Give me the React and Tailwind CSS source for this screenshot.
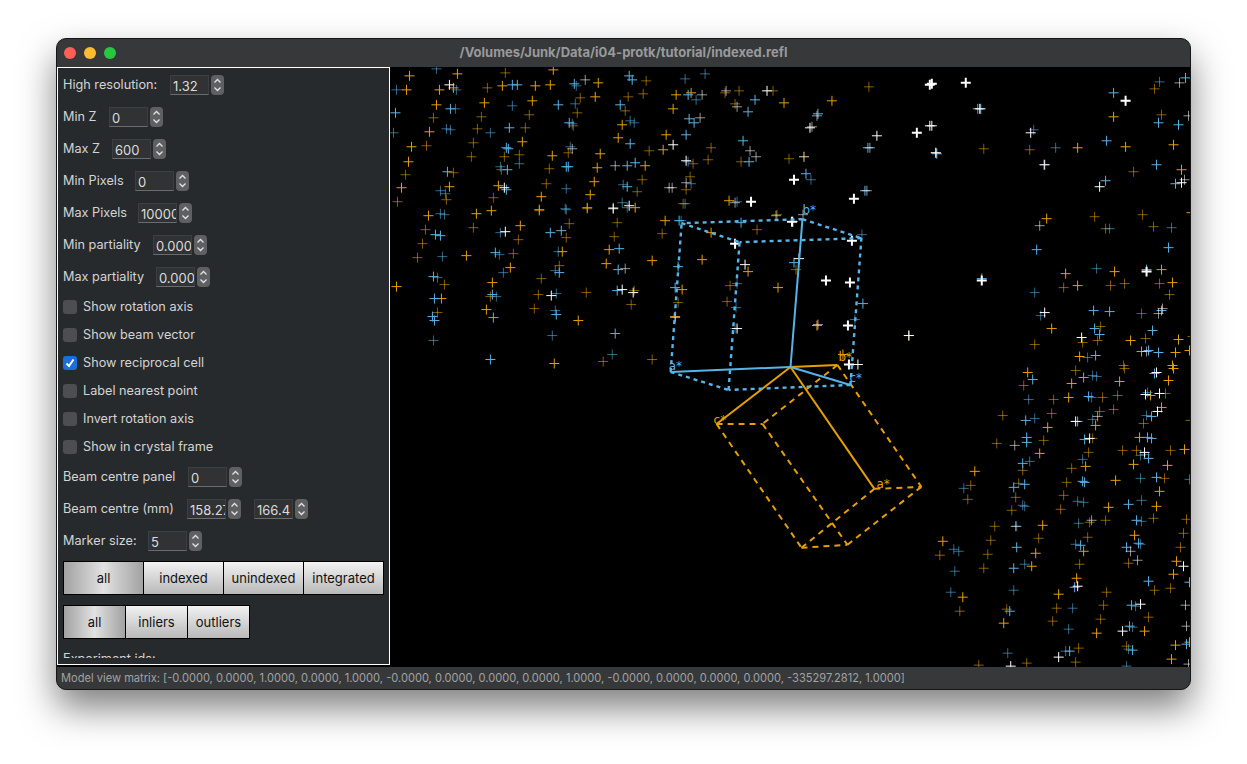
import React from 'react';

const BLUE = '#56b4e9';
const ORANGE = '#e69f00';

// spots read off 3x crops of the view: [origin x, origin y, orange, blue, white]
// each spot is x, y, level in crop pixels (level: 0 dim, 1 bright, 2 heavy)
const crops = [
    [390, 60,
        [[57,43,1],[200,37,1],[345,32,0],[488,25,1],[290,77,0],[335,73,1],[435,73,1],[480,68,1],[147,85,1],[48,85,1],[190,78,1],[138,128,1],[282,122,1],[425,116,1],[570,108,0],[614,105,1],[624,62,1],[768,56,0],[713,104,0],[760,97,0],[128,168,0],[272,165,0],[418,158,0],[560,152,0],[705,147,0],[695,188,1],[116,209,1],[260,201,0],[406,197,0],[548,191,0],[827,220,1],[683,227,1],[250,244,0],[396,239,1],[63,254,1],[108,251,0],[243,285,0],[386,278,0],[341,284,0],[486,281,1],[533,272,0],[629,275,1],[776,266,0],[819,263,1],[54,299,1],[188,334,0],[45,340,0],[332,325,0],[477,320,0],[620,318,1],[765,311,1],[33,379,1],[177,375,1],[324,371,1],[469,365,0],[612,360,1],[757,354,0],[742,390,0],[600,398,1],[453,404,1],[310,408,0],[167,415,0],[22,421,0],[447,444,1],[591,438,1]],
        [[138,22,0],[18,85,0],[197,83,0],[366,68,1],[381,70,1],[551,65,1],[558,72,0],[717,42,1],[727,55,1],[14,152,1],[180,140,1],[196,142,0],[366,133,0],[505,130,1],[556,125,0],[690,128,1],[720,178,0],[732,182,0],[536,183,1],[545,187,0],[357,197,1],[300,212,0],[168,201,0],[180,204,0],[10,212,0],[720,246,1],[541,254,0],[348,258,1],[355,262,1],[734,302,1],[711,311,1],[527,314,1],[534,316,1],[330,316,0],[350,324,1],[387,307,0],[171,331,1],[700,368,0],[712,375,1],[527,380,0],[150,387,0],[165,396,0],[347,384,1],[697,422,0],[526,442,0]],
        [[178,70,1],[584,55,0],[545,260,0],[675,312,0],[343,378,1],[838,378,0],[670,438,0],[717,433,1]],
    ],
    [390, 205,
        [[115,28,1],[258,21,1],[303,13,1],[447,12,0],[591,7,0],[735,2,1],[105,69,0],[249,62,0],[390,57,1],[537,51,0],[681,47,0],[825,41,1],[95,111,0],[384,99,0],[528,94,0],[673,89,0],[815,82,0],[82,152,0],[228,147,1],[369,140,0],[516,134,1],[657,128,1],[360,182,1],[507,177,0],[648,170,1],[786,161,1],[163,234,0],[306,228,1],[454,217,0],[18,240,1],[153,276,1],[301,269,0],[444,264,0],[588,258,0],[733,253,0],[141,318,0],[288,310,1],[432,306,0],[722,294,0],[564,341,1],[785,459,0],[639,465,0],[493,471,1],[855,330,1]],
        [[150,22,0],[163,24,0],[527,8,0],[712,4,0],[868,43,1],[135,84,1],[150,87,1],[330,78,0],[480,78,1],[513,72,1],[315,139,1],[328,143,0],[687,125,1],[156,151,0],[504,134,0],[340,199,0],[494,192,0],[507,197,1],[684,189,1],[129,209,1],[141,212,0],[132,276,1],[306,264,1],[319,269,0],[498,261,0],[681,252,1],[309,333,1],[495,312,0],[497,325,1],[127,329,1],[133,342,1],[675,381,1],[128,403,0],[487,388,0],[666,444,0],[301,459,1],[855,242,1],[864,180,1]],
        [[345,75,1],[670,5,1],[705,185,0],[696,249,1],[729,258,1],[484,267,1],[855,333,0]],
    ],
    [670, 66,
        [[18,81,1],[64,75,1],[207,70,0],[165,75,0],[308,68,0],[342,105,1],[487,99,1],[597,57,0],[196,108,0],[10,123,1],[124,241,0],[114,276,0],[212,282,0],[357,274,0],[402,268,0],[69,288,0],[59,328,0],[48,367,0],[178,399,1],[40,408,0]],
        [[44,33,0],[105,18,0],[55,81,1],[79,95,0],[255,96,1],[235,133,1],[445,138,1],[57,153,1],[72,165,1],[49,201,1],[220,219,1],[595,239,1],[237,282,1],[54,282,0],[407,319,1],[423,335,0],[63,347,0],[585,370,1],[201,403,0],[46,409,0]],
        [[96,81,0],[168,70,0],[290,70,1],[201,116,0],[91,150,0],[441,145,0],[421,180,1],[427,177,0],[620,204,1],[600,239,0],[8,232,1],[241,250,0],[258,267,0],[47,280,1],[402,268,0],[373,337,2],[48,345,0],[552,394,2],[590,370,0],[242,403,2],[195,405,0],[5,360,0]],
    ],
    [650, 190,
        [[322,115,0],[182,124,1],[156,204,1],[295,240,1],[437,235,0],[240,281,0],[383,288,1],[95,293,1],[85,334,0],[231,330,0],[500,402,1],[778,432,1],[578,488,1],[380,70,0]],
        [[94,88,0],[273,94,1],[428,90,1],[635,130,0],[432,212,1],[260,277,0],[640,335,1],[258,349,0],[615,384,0],[255,410,0]],
        [[378,72,0],[427,90,2],[458,70,0],[605,147,2],[255,155,2],[284,219,1],[448,200,1],[528,267,2],[600,272,2],[260,410,1],[593,402,2],[503,400,0],[778,432,1],[598,518,2],[625,518,1]],
    ],
    [930, 66,
        [[676,64,0],[553,147,1],[696,140,0],[162,244,0],[300,245,0],[444,240,1],[588,237,1],[732,231,1],[612,312,0],[756,306,1],[350,452,1],[495,447,0],[639,441,0],[528,483,0],[671,477,0],[786,436,1],[409,617,1],[554,612,1],[697,606,1],[402,659,0],[444,654,1],[543,654,0],[586,647,0],[690,648,0],[729,644,1],[721,682,0],[367,784,1],[513,777,0],[314,831,0],[503,819,0],[459,825,0],[604,820,1],[647,814,0],[746,815,1],[789,808,0],[450,866,1],[636,852,1],[739,855,1],[780,848,1],[729,894,1],[583,895,0]],
        [[690,42,0],[768,30,1],[553,75,1],[587,100,0],[686,165,1],[747,170,1],[312,186,0],[152,122,1],[531,219,1],[378,240,0],[681,292,1],[341,291,0],[528,339,1],[738,348,1],[541,483,0],[726,479,0],[322,547,1],[717,540,1],[500,602,0],[650,606,1],[155,632,1],[315,675,0],[493,730,1],[540,731,1],[636,739,0],[697,728,1],[332,743,0],[669,788,1],[495,783,1],[511,801,1],[658,848,1],[688,855,1],[498,864,1],[474,870,0],[20,258,1]],
        [[5,48,2],[107,45,2],[143,122,0],[150,122,1],[587,100,2],[5,175,1],[18,256,0],[304,195,1],[345,290,1],[510,358,1],[757,345,1],[765,335,0],[750,45,0],[778,145,0],[330,473,0],[652,611,2],[157,638,2],[345,735,1],[700,722,0],[687,737,0],[456,810,1],[650,852,0]],
    ],
    [930, 366,
        [[294,14,1],[437,8,0],[585,2,0],[731,2,1],[283,53,0],[426,48,1],[570,43,1],[717,38,1],[373,96,0],[417,89,1],[518,89,0],[563,84,0],[707,78,0],[663,85,1],[220,143,0],[366,137,0],[510,131,0],[553,125,0],[697,119,1],[354,179,1],[497,174,1],[642,167,0],[784,160,0],[202,227,0],[343,220,0],[489,213,0],[630,209,1],[331,259,1],[477,254,0],[579,248,0],[621,248,0],[723,248,0],[765,245,1],[135,313,1],[280,308,0],[426,302,0],[468,296,1],[612,291,1],[714,293,1],[124,354,0],[268,349,0],[411,344,0],[559,338,1],[705,332,0],[115,396,0],[258,389,0],[402,384,0],[691,373,1],[247,430,0],[393,425,0],[538,420,1],[681,417,1],[195,477,0],[339,474,1],[481,465,0],[528,459,0],[672,453,0],[772,456,0],[38,522,1],[184,519,0],[327,514,0],[474,509,0],[615,504,1],[762,497,0],[30,564,0],[174,560,0],[318,557,1],[462,551,1],[753,540,0],[163,602,0],[306,596,1],[451,590,0],[597,587,0],[742,581,1],[441,632,1],[732,620,1],[99,689,1],[387,680,1],[531,674,0],[676,669,0],[723,662,0],[90,731,0],[232,726,0],[380,722,0],[522,715,0],[222,767,1],[369,762,0],[513,757,0],[657,750,0],[501,797,1],[645,791,1],[448,844,0],[592,838,0],[738,833,1],[780,826,1],[726,875,1],[147,893,0],[292,888,0],[437,885,0]],
        [[676,18,1],[310,36,1],[461,30,1],[488,24,0],[502,27,0],[298,96,0],[477,87,1],[487,90,0],[655,75,0],[288,159,1],[316,152,0],[445,163,1],[490,156,0],[652,144,0],[666,147,1],[291,209,1],[291,224,1],[465,216,1],[654,210,1],[666,212,1],[458,276,0],[278,287,1],[299,282,0],[633,265,0],[645,262,0],[657,272,1],[102,363,0],[253,361,1],[284,352,1],[459,343,1],[466,346,1],[632,332,0],[681,329,1],[445,401,0],[461,406,0],[278,415,0],[285,417,0],[597,410,1],[636,399,0],[780,335,0],[447,468,0],[622,460,1],[637,463,0],[260,477,0],[71,545,0],[87,552,0],[261,541,1],[437,532,0],[452,535,1],[627,527,1],[633,530,0],[592,540,1],[75,612,0],[252,604,1],[285,590,0],[657,642,1],[64,676,0],[253,670,0],[435,660,1],[780,645,1],[240,731,1],[430,724,0],[605,715,1],[618,716,0],[418,787,0],[600,778,1],[609,780,0],[233,858,0],[408,851,0],[421,853,1],[598,845,0],[609,850,1],[770,830,1],[592,898,0]],
        [[681,15,1],[648,80,1],[690,78,1],[683,133,1],[503,147,0],[439,163,1],[480,212,1],[646,255,1],[255,235,0],[486,458,0],[257,478,0],[603,552,0],[623,578,0],[761,597,1],[445,657,1],[632,711,1],[768,715,0],[772,778,0],[579,791,1],[387,869,1],[243,898,1],[778,890,0]],
    ],
];

const extraWhite = [[930, 83, 2], [917, 131, 2], [930, 124, 1], [936, 151, 1]];

function Plus({ x, y, c, level }) {
    const px = Math.round(x) + 0.5;
    const py = Math.round(y) + 0.5;
    const s = 5;
    const o = level === 0 ? 0.58 : 1;
    const w = level === 2 ? 2 : 1;
    return (
        <path d={`M${px - s} ${py}H${px + s}M${px} ${py - s}V${py + s}`} stroke={c} strokeOpacity={o} strokeWidth={w} fill="none" />
    );
}

function Spots() {
    const out = [];
    crops.forEach(([ox, oy, orange, blue, white], i) => {
        [[orange, ORANGE], [blue, BLUE], [white, '#ffffff']].forEach(([list, c]) => {
            list.forEach((s, j) => {
                out.push(<Plus key={`${i}-${c}-${j}`} x={ox + s[0] / 3} y={oy + s[1] / 3} c={c} level={s[2]} />);
            });
        });
    });
    extraWhite.forEach((s, j) => {
        out.push(<Plus key={`x-${j}`} x={s[0]} y={s[1]} c="#ffffff" level={s[2]} />);
    });
    return out;
}

function Cell({ color, o, a, b, c, ab, ac, bc, abc, dash, dashWidth }) {
    const solid = [a, b, c];
    const dashed = [[a, ab], [b, ab], [a, ac], [c, ac], [b, bc], [c, bc], [ab, abc], [ac, abc], [bc, abc]];
    return (
        <g stroke={color} fill="none" strokeWidth="2">
            {dashed.map((l, i) => (
                <line key={i} x1={l[0][0]} y1={l[0][1]} x2={l[1][0]} y2={l[1][1]} strokeDasharray={dash} strokeWidth={dashWidth} />
            ))}
            {solid.map((p, i) => (
                <line key={i} x1={o[0]} y1={o[1]} x2={p[0]} y2={p[1]} />
            ))}
        </g>
    );
}

function Scene() {
    return (
        <svg width="801" height="600" viewBox="390 66 801 600" className="block">
            <Spots />
            <Cell
                color={ORANGE}
                dash="6 5"
                dashWidth="2"
                o={[791, 366]}
                a={[875, 488]}
                b={[838, 364]}
                c={[717, 423]}
                ab={[922, 486]}
                ac={[802, 547]}
                bc={[763, 423]}
                abc={[848, 544]}
            />
            <Cell
                color={BLUE}
                dash="4 4"
                dashWidth="2.4"
                o={[791, 366]}
                a={[671, 371]}
                b={[803, 218]}
                c={[851, 384]}
                ab={[682, 222]}
                ac={[729, 389]}
                bc={[862, 237]}
                abc={[740, 241]}
            />
            <g fontFamily="'DejaVu Sans', sans-serif" fontSize="12">
                <text x="669" y="369" fill={BLUE}>a*</text>
                <text x="803" y="213" fill={BLUE}>b*</text>
                <text x="850" y="381" fill={BLUE}>c*</text>
                <text x="839" y="360" fill={ORANGE}>b*</text>
                <text x="714" y="423" fill={ORANGE}>c*</text>
                <text x="877" y="487" fill={ORANGE}>a*</text>
            </g>
        </svg>
    );
}

function Spin({ value, className = '' }) {
    return (
        <div className={`flex items-center gap-[2px] ${className}`}>
            <div className="w-[39px] h-[20px] bg-[#303234] border border-[#3c3e40] border-b-[#6a6b6d] pl-[2px] overflow-hidden whitespace-nowrap leading-[20px] text-[13px] text-[#dcdcdc]">
                {value}
            </div>
            <div className="w-[13px] h-[20px] rounded-[4px] bg-[#5f6062] flex flex-col items-center justify-center gap-[2px]">
                <svg width="9" height="6" viewBox="0 0 9 6" fill="none" stroke="#e4e4e4" strokeWidth="1.3">
                    <path d="M1.5 4.5 4.5 1.5 7.5 4.5" />
                </svg>
                <svg width="9" height="6" viewBox="0 0 9 6" fill="none" stroke="#e4e4e4" strokeWidth="1.3">
                    <path d="M1.5 1.5 4.5 4.5 7.5 1.5" />
                </svg>
            </div>
        </div>
    );
}

function SpinRow({ label, labelWidth, value }) {
    return (
        <div className="h-[32px] flex items-center">
            <span className={labelWidth}>{label}</span>
            <Spin value={value} />
        </div>
    );
}

function Check({ label, checked }) {
    return (
        <div className="h-[28px] flex items-center gap-[6px]">
            {checked ? (
                <div className="w-[14px] h-[14px] rounded-[3px] bg-[#1a6fdf] flex items-center justify-center">
                    <svg width="10" height="10" viewBox="0 0 10 10" fill="none" stroke="#ffffff" strokeWidth="2">
                        <path d="M1.5 5.5 4 8 8.5 1.5" />
                    </svg>
                </div>
            ) : (
                <div className="w-[14px] h-[14px] rounded-[3px] bg-[#4c4e50]" />
            )}
            <span>{label}</span>
        </div>
    );
}

function ToggleGroup({ items, itemWidth, firstWidth, className = '' }) {
    return (
        <div className={`flex w-fit border border-black h-[34px] text-[13px] text-[#111111] ${className}`}>
            {items.map((item, i) => (
                <div
                    key={item}
                    className={`${i === 0 ? firstWidth : itemWidth} pt-px flex items-center justify-center ${i > 0 ? 'border-l border-black' : ''} ${i === 0 ? 'bg-gradient-to-r from-[#a2a2a2] via-[#e2e2e2] to-[#a2a2a2]' : 'bg-gradient-to-b from-[#f2f2f2] to-[#b9b9b9]'}`}
                >
                    {item}
                </div>
            ))}
        </div>
    );
}

function Sidebar() {
    return (
        <div className="w-[333px] h-[598px] border border-white bg-[#272a2c] text-[12.7px] text-[#d4d4d4] shrink-0">
            <div className="h-[590px] overflow-hidden pl-[5px] pt-[1px]">
                <SpinRow label="High resolution:" labelWidth="w-[107px]" value="1.32" />
                <SpinRow label="Min Z" labelWidth="w-[46px]" value="0" />
                <SpinRow label="Max Z" labelWidth="w-[49px]" value="600" />
                <SpinRow label="Min Pixels" labelWidth="w-[72px]" value="0" />
                <SpinRow label="Max Pixels" labelWidth="w-[75px]" value="10000" />
                <SpinRow label="Min partiality" labelWidth="w-[90px]" value="0.000" />
                <SpinRow label="Max partiality" labelWidth="w-[93px]" value="0.000" />
                <Check label="Show rotation axis" />
                <Check label="Show beam vector" />
                <Check label="Show reciprocal cell" checked />
                <Check label="Label nearest point" />
                <Check label="Invert rotation axis" />
                <Check label="Show in crystal frame" />
                <SpinRow label="Beam centre panel" labelWidth="w-[125px]" value="0" />
                <div className="h-[32px] flex items-center">
                    <span className="w-[124px]">Beam centre (mm)</span>
                    <Spin value="158.27" />
                    <Spin value="166.4" className="ml-[13px]" />
                </div>
                <SpinRow label="Marker size:" labelWidth="w-[85px]" value="5" />
                <ToggleGroup className="mt-[4px]" firstWidth="w-[79px]" itemWidth="w-[80px]" items={['all', 'indexed', 'unindexed', 'integrated']} />
                <ToggleGroup className="mt-[10px]" firstWidth="w-[61px]" itemWidth="w-[62px]" items={['all', 'inliers', 'outliers']} />
                <div className="mt-[10px]">Experiment ids:</div>
            </div>
        </div>
    );
}

export default function App() {
    return (
        <div className="w-[1247px] h-[764px] bg-white pt-[38px] pl-[56px] overflow-hidden" style={{ fontFamily: "Inter, 'Liberation Sans', sans-serif" }}>
            <div className="w-[1135px] h-[652px] rounded-[10px] overflow-hidden bg-[#36383a] border border-[#161616] shadow-[0_18px_36px_rgba(0,0,0,0.5)] flex flex-col">
                {/* Title bar */}
                <div className="relative h-[28px] shrink-0 flex items-center justify-center text-[13px] font-bold text-[#999a9b]">
                    <div className="absolute left-[7px] top-[8px] flex gap-[8px]">
                        <span className="w-[12px] h-[12px] rounded-full bg-[#fe5f57]" />
                        <span className="w-[12px] h-[12px] rounded-full bg-[#febc2e]" />
                        <span className="w-[12px] h-[12px] rounded-full bg-[#27c840]" />
                    </div>
                    /Volumes/Junk/Data/i04-protk/tutorial/indexed.refl
                </div>
                {/* Main */}
                <div className="flex h-[600px] bg-black shrink-0">
                    <Sidebar />
                    <Scene />
                </div>
                {/* Status bar */}
                <div className="flex-1 flex items-center pl-[4px] text-[11.1px] text-[#a2a3a4] whitespace-nowrap">
                    Model view matrix: [-0.0000, 0.0000, 1.0000, 0.0000, 1.0000, -0.0000, 0.0000, 0.0000, 0.0000, 1.0000, -0.0000, 0.0000, 0.0000, 0.0000, -335297.2812, 1.0000]
                </div>
            </div>
        </div>
    );
}
